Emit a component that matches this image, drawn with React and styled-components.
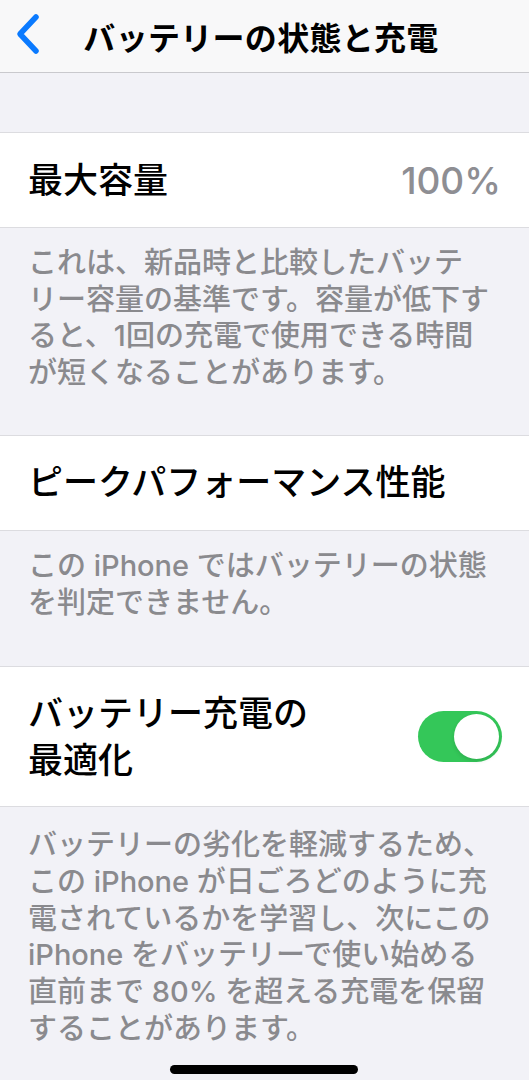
import React from "react";
import styled, { createGlobalStyle } from "styled-components";

const GlobalStyle = createGlobalStyle`
  html, body {
    margin: 0;
    padding: 0;
    background: #f2f2f7;
  }
  body {
    font-family: "Inter", "Noto Sans CJK JP", sans-serif;
    -webkit-font-smoothing: antialiased;
  }
`;

function BackChevron() {
  return (
    <svg width="28" height="42" viewBox="0 0 28 42">
      <path
        d="M22 4 L6 21 L22 38"
        fill="none"
        stroke="#0a7aff"
        strokeWidth="5.5"
        strokeLinecap="round"
        strokeLinejoin="round"
      />
    </svg>
  );
}

function App() {
  return (
    <Screen>
      <GlobalStyle />
      <NavBar>
        <BackButton>
          <BackChevron />
        </BackButton>
        <Title>バッテリーの状態と充電</Title>
      </NavBar>

      <Spacer />

      <Row>
        <RowLabel>最大容量</RowLabel>
        <RowValue>100%</RowValue>
      </Row>
      <Footer $top={17} $bottom={43}>
        これは、新品時と比較したバッテ
        <br />
        リー容量の基準です。容量が低下す
        <br />
        ると、1回の充電で使用できる時間
        <br />
        が短くなることがあります。
      </Footer>

      <Row>
        <RowLabel>ピークパフォーマンス性能</RowLabel>
      </Row>
      <Footer $top={17} $bottom={45}>
        この iPhone ではバッテリーの状態
        <br />
        を判定できません。
      </Footer>

      <Row $compact>
        <RowLabel>
          バッテリー充電の
          <br />
          最適化
        </RowLabel>
        <Toggle $on>
          <Knob />
        </Toggle>
      </Row>
      <Footer $top={20} $bottom={40}>
        バッテリーの劣化を軽減するため、
        <br />
        この iPhone が日ごろどのように充
        <br />
        電されているかを学習し、次にこの
        <br />
        iPhone をバッテリーで使い始める
        <br />
        直前まで 80% を超える充電を保留
        <br />
        することがあります。
      </Footer>

      <HomeIndicator />
    </Screen>
  );
}

const Screen = styled.div`
  position: relative;
  width: 529px;
  min-height: 1080px;
  background: #f2f2f7;
  overflow: hidden;
`;

const NavBar = styled.header`
  height: 72px;
  display: flex;
  align-items: center;
  justify-content: center;
  position: relative;
  background: #f8f8f9;
  border-bottom: 1px solid #c9c9cd;
`;

const BackButton = styled.div`
  position: absolute;
  left: 14px;
  top: 13px;
  display: flex;
`;

const Title = styled.h1`
  margin: 0 0 0 -7px;
  font-size: 32px;
  font-weight: 700;
  color: #000;
  letter-spacing: 0.3px;
`;

const Spacer = styled.div`
  height: 59px;
`;

const Row = styled.div`
  display: flex;
  align-items: center;
  justify-content: space-between;
  padding: ${(p) => (p.$compact ? "22.5px" : "23.5px")} 28px;
  background: #fff;
  border-top: 1px solid #dcdce0;
  border-bottom: 1px solid #dcdce0;
`;

const RowLabel = styled.div`
  font-size: 35px;
  line-height: 47px;
  font-weight: 500;
  color: #000;
`;

const RowValue = styled.div`
  font-size: 37px;
  line-height: 47px;
  font-weight: 500;
  color: #8e8e93;
`;

const Footer = styled.p`
  margin: 0;
  padding: ${(p) => p.$top}px 28px ${(p) => p.$bottom}px 28px;
  font-size: 29px;
  line-height: 36.7px;
  font-weight: 500;
  color: #8a8a8e;
  white-space: nowrap;
`;

const Toggle = styled.div`
  width: 84px;
  height: 51px;
  border-radius: 26px;
  background: ${(p) => (p.$on ? "#34c759" : "#e9e9eb")};
  display: flex;
  align-items: center;
  justify-content: ${(p) => (p.$on ? "flex-end" : "flex-start")};
  padding: 0 3px;
  box-sizing: border-box;
  margin-right: -1px;
`;

const Knob = styled.div`
  width: 45px;
  height: 45px;
  border-radius: 50%;
  background: #fff;
  box-shadow: 0 2px 4px rgba(0, 0, 0, 0.12);
`;

const HomeIndicator = styled.div`
  position: absolute;
  left: 170px;
  bottom: 13px;
  width: 188px;
  height: 9px;
  border-radius: 5px;
  background: #000;
`;

export default App;
